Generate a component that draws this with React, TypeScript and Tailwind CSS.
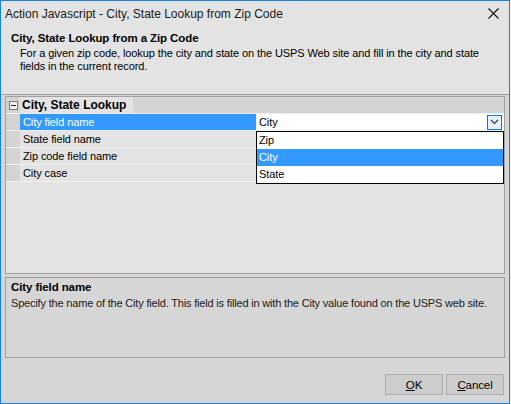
import React from "react";

const font = { fontFamily: '"Liberation Sans", Arial, sans-serif' };

function Row({ label, selected }: { label: string; selected?: boolean }) {
  return (
    <div className="flex h-[17px] border-t border-[#f0f0f0]">
      <div className="w-[14px] bg-[#d4d4d4]" />
      <div
        className={
          selected
            ? "w-[236px] bg-[#3399ff] text-white pl-[3px] leading-[16px]"
            : "w-[236px] bg-[#e3e3e3] text-black pl-[3px] leading-[16px]"
        }
      >
        {label}
      </div>
      <div className="w-px bg-[#f0f0f0]" />
      <div className="flex-1 bg-white flex items-center justify-between pl-[2px] pr-[2px]">
        {selected ? (
          <>
            <span className="leading-[16px]">City</span>
            <div className="w-[15px] h-[15px] border border-[#0078d7] bg-[#e5f1fb] flex items-center justify-center">
              <svg width="9" height="6" viewBox="0 0 9 6">
                <path d="M1 1 L4.5 4.5 L8 1" stroke="#333" strokeWidth="1.1" fill="none" />
              </svg>
            </div>
          </>
        ) : null}
      </div>
    </div>
  );
}

export default function App() {
  return (
    <div className="w-[511px] h-[404px] bg-[#f0f0f0] text-[11px] tracking-[-0.1px] text-black" style={font}>
      <div className="relative w-[510px] h-[404px] border border-[#1883d7] bg-[#d6d6d6] flex flex-col">
        {/* title bar */}
        <div className="h-[30px] bg-[#e3e3e3] flex items-start justify-between pl-[4px] pr-[10px] pt-[4px]">
          <span className="text-[12px] tracking-normal text-[#1a1a1a]">Action Javascript - City, State Lookup from Zip Code</span>
          <svg width="11" height="11" viewBox="0 0 11 11" className="mt-[3px]">
            <path d="M0.5 0.5 L10.5 10.5 M10.5 0.5 L0.5 10.5" stroke="#111" strokeWidth="1.1" />
          </svg>
        </div>
        {/* header */}
        <div className="h-[64px] bg-[#e3e3e3] border-b border-[#a0a0a0] pl-[10px] pt-[0px]">
          <div className="font-bold text-[11.5px] leading-[14px]">City, State Lookup from a Zip Code</div>
          <div className="pl-[9px] pt-[2px] leading-[13px]">
            For a given zip code, lookup the city and state on the USPS Web site and fill in the city and state
            <br />
            fields in the current record.
          </div>
        </div>
        {/* body */}
        <div className="flex-1 flex flex-col px-[4px] pt-[1px]">
          <div className="h-[178px] border border-[#a0a0a0] bg-[#e3e3e3] flex flex-col">
            <div className="flex h-[16px] bg-[#d4d4d4]">
              <div className="w-[14px] flex items-center justify-center">
                <div className="w-[9px] h-[9px] border border-[#7a7a7a] bg-[#f0f0f0] flex items-center justify-center">
                  <div className="w-[5px] h-px bg-[#222]" />
                </div>
              </div>
              <div className="bg-[#e3e3e3] font-bold pl-[2px] pr-[7px] leading-[16px] text-[12px] tracking-normal">City, State Lookup</div>
            </div>
            <Row label="City field name" selected />
            <Row label="State field name" />
            <Row label="Zip code field name" />
            <Row label="City case" />
            <div className="border-t border-[#f0f0f0]" />
          </div>
          <div className="mt-[3px] h-[81px] border border-[#a0a0a0] bg-[#d6d6d6] pl-[5px] pt-[2px]">
            <div className="font-bold text-[11.5px] leading-[14px]">City field name</div>
            <div className="leading-[16px] pt-[1px] text-[#1a1a1a] tracking-[-0.18px]">
              Specify the name of the City field. This field is filled in with the City value found on the USPS web site.
            </div>
          </div>
          <div className="flex justify-end gap-[3px] mt-[16px] pr-[1px]">
            <button className="w-[58px] h-[21px] bg-[#cccccc] border border-[#adadad] text-[11.5px] leading-[18px]">
              <span className="underline">O</span>K
            </button>
            <button className="w-[58px] h-[21px] bg-[#cccccc] border border-[#adadad] text-[11.5px] leading-[18px]">
              <span className="underline">C</span>ancel
            </button>
          </div>
        </div>
        {/* dropdown list */}
        <div className="absolute left-[255px] top-[130px] w-[248px] h-[53px] border border-black bg-white">
          <div className="h-[17px] pl-[2px] leading-[17px]">Zip</div>
          <div className="h-[17px] pl-[2px] leading-[17px] bg-[#3399ff] text-white">City</div>
          <div className="h-[17px] pl-[2px] leading-[17px]">State</div>
        </div>
      </div>
    </div>
  );
}
